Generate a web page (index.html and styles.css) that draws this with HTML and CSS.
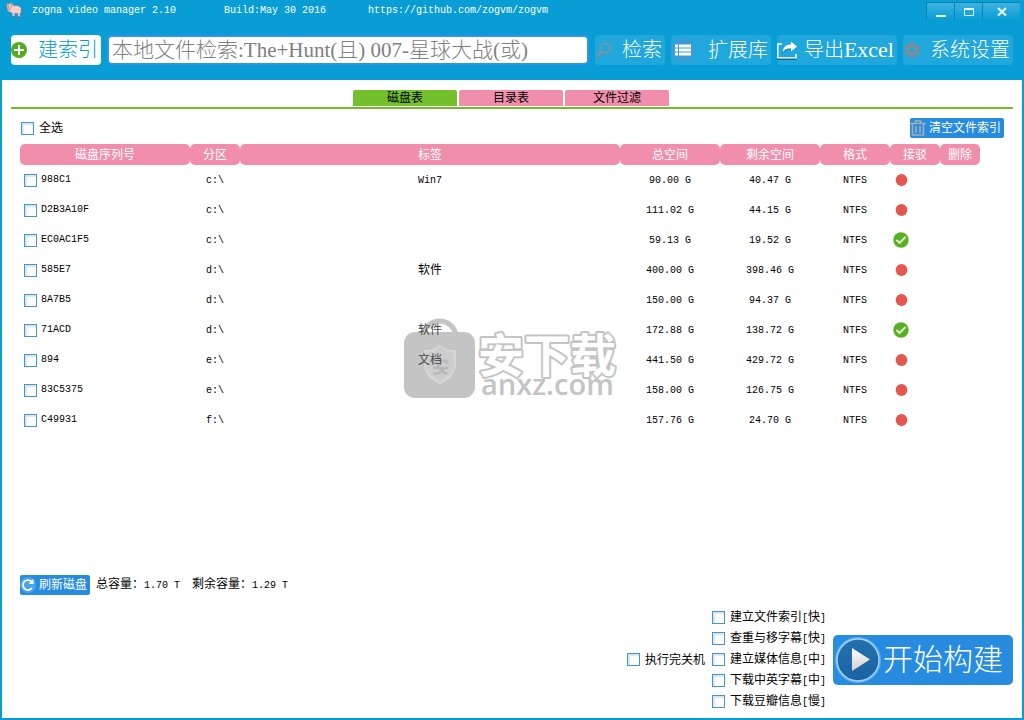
FILE: index.html
```html
<!DOCTYPE html>
<html lang="zh-CN">
<head>
<meta charset="utf-8">
<title>zogna video manager 2.10</title>
<link rel="stylesheet" href="styles.css">
</head>
<body>
<div class="window">
  <header class="header">
    <div class="titlebar">
      <svg class="pig" viewBox="0 0 16 16" aria-hidden="true">
        <path d="M.800 1.500L3 2.200 5.500.800 7 3.500l5.500.5 2.500 2v4l-1 1.500V15h-2v-3.500L8.500 11v3.500h-2V11L3 9.500 1.500 8z" fill="#f6cfca" stroke="#c58f88" stroke-width=".5"/>
        <path d="M1 1.800l2 .8-1 2zM5.300 1l1.200 3-2.300-1.200z" fill="#d98c86"/>
        <rect x="2" y="6.200" width="3" height="2" rx="1" fill="#dc8f8a"/>
        <path d="M2.300 5h.9M4.700 4.700h.9" stroke="#50302e" stroke-width=".9"/>
        <path d="M6.500 14.600h2M12 15h2" stroke="#6b4a48" stroke-width=".8"/>
      </svg>
      <span class="mono app-name">zogna video manager 2.10</span>
      <span class="mono build">Build:May 30 2016</span>
      <a class="mono site" href="https://github.com/zogvm/zogvm">https://github.com/zogvm/zogvm</a>
      <div class="controls">
        <button class="control" aria-label="最小化"><svg viewBox="0 0 12 12"><path d="M1 10h10" stroke="#e8f7fd" stroke-width="2"/></svg></button>
        <button class="control" aria-label="最大化"><svg viewBox="0 0 12 12"><path d="M1.500 2.500h9v7h-9z" fill="none" stroke="#d5f0fb"/><path d="M1 3h10" stroke="#e8f7fd" stroke-width="2"/></svg></button>
        <button class="control control-close" aria-label="关闭"><svg viewBox="0 0 12 12"><path d="M2 2l8 7.500M10 2L2 9.500" stroke="#e8f7fd" stroke-width="2.200"/></svg></button>
      </div>
    </div>
    <div class="toolbar">
      <button class="tool tool-index"><svg class="icon16" viewBox="0 0 16 16"><circle cx="8" cy="8" r="8" fill="#53ad1e"/><path d="M8 3v10M3 8h10" stroke="#fff" stroke-width="2"/></svg><span>建索引</span></button>
      <input class="search" type="text" aria-label="本地文件检索" placeholder="本地文件检索:The+Hunt(且) 007-星球大战(或)">
      <button class="tool tool-search"><svg class="icon16" viewBox="0 0 16 16"><circle cx="10.500" cy="6" r="4.800" fill="none" stroke="#8c9296" stroke-width="1.500"/><path d="M7 9.500L1.500 14.500" stroke="#8c8f93" stroke-width="2.400"/></svg><span>检索</span></button>
      <button class="tool tool-library"><svg class="icon24" viewBox="0 0 24 24"><circle cx="12" cy="12" r="12" fill="#3b9cd6"/><path d="M4 8h3M4 12h3M4 16h3M8 8h12M8 12h12M8 16h12" stroke="#fff" stroke-width="3"/></svg><span>扩展库</span></button>
      <button class="tool tool-export"><svg class="icon20" viewBox="0 0 20 20"><path d="M5 4H.800v14H19v-4" fill="none" stroke="#fff" stroke-width="1.500"/><path d="M0 19.200h19.500" stroke="#234656"/><path d="M6 12C6 7 9 4.500 14 4.500V1.500L20 6.500l-6 5V8.500C10 8.500 8 9 6 12z" fill="#fff"/><path d="M6 12.500c2-2.500 4-3.500 8-3.500" fill="none" stroke="#3a6170" stroke-width=".7"/></svg><span>导出<span class="latin">Excel</span></span></button>
      <button class="tool tool-settings"><svg class="icon16 gear" viewBox="0 0 16 16"><path d="M6.500 0h3l.5 2.500 1.500 1L14 2.500l1.700 2.800L14 7v2l1.700 1.700L14 13.500l-2.500-1-1.500 1L9.500 16h-3L6 13.500l-1.500-1-2.500 1L.300 10.700 2 9V7L.300 5.300 2 2.500l2.500 1L6 2.500zM8 5a3 3 0 100 6 3 3 0 000-6z" fill="#858b91" fill-rule="evenodd"/></svg><span>系统设置</span></button>
    </div>
  </header>

  <main class="main">
    <nav class="tabs">
      <button class="tab tab-active">磁盘表</button>
      <button class="tab">目录表</button>
      <button class="tab">文件过滤</button>
    </nav>

    <section class="panel">
      <div class="panel-top">
        <label class="check"><input type="checkbox">全选</label>
        <button class="small-button"><svg class="trash" viewBox="0 0 16 16"><path d="M0 3.500h16M5.500 3V1h5v2M2.500 3v12h11V3M6 6v7M10 6v7" fill="none" stroke="#a8adb3" stroke-width="1.600"/></svg>清空文件索引</button>
      </div>

      <svg class="watermark" viewBox="0 0 216 84" aria-hidden="true">
        <path d="M19 16a17 17 0 0 1 33 0" fill="none" stroke="#c4c4c4" stroke-width="5"/>
        <rect x="0" y="14" width="71" height="66" rx="11" fill="#c4c4c4"/>
        <path d="M36 28c5 4 10 5 15 5v14c0 9-8 14-15 18-7-4-15-9-15-18V33c5 0 10-1 15-5z" fill="#cdcdcd" stroke="#dadada" stroke-width="1.500"/>
        <path d="M29 46v-3h14v3M36 40v3M29 50h15M34 46c0 5 4 8 9 10M40 50c-2 4-6 6-11 6" fill="none" stroke="#b8b8b8" stroke-width="2.500"/>
        <text class="wm-name" x="74" y="54">安下载</text>
        <text class="wm-site" x="77" y="77">anxz.com</text>
      </svg>

      <table class="disks">
        <colgroup><col class="c-serial"><col class="c-part"><col><col class="c-size"><col class="c-size"><col class="c-format"><col class="c-link"><col class="c-del"></colgroup>
        <thead><tr><th>磁盘序列号</th><th>分区</th><th>标签</th><th>总空间</th><th>剩余空间</th><th>格式</th><th>接驳</th><th>删除</th></tr></thead>
        <tbody>
          <tr><td><label class="disk mono"><input type="checkbox">988C1</label></td><td class="mono">c:\</td><td class="mono">Win7</td><td class="mono">90.00 G</td><td class="mono">40.47 G</td><td class="mono">NTFS</td><td><svg class="state" viewBox="0 0 16 16"><use href="#off"/></svg></td><td></td></tr>
          <tr><td><label class="disk mono"><input type="checkbox">D2B3A10F</label></td><td class="mono">c:\</td><td></td><td class="mono">111.02 G</td><td class="mono">44.15 G</td><td class="mono">NTFS</td><td><svg class="state" viewBox="0 0 16 16"><use href="#off"/></svg></td><td></td></tr>
          <tr><td><label class="disk mono"><input type="checkbox">EC0AC1F5</label></td><td class="mono">c:\</td><td></td><td class="mono">59.13 G</td><td class="mono">19.52 G</td><td class="mono">NTFS</td><td><svg class="state" viewBox="0 0 16 16"><use href="#on"/></svg></td><td></td></tr>
          <tr><td><label class="disk mono"><input type="checkbox">585E7</label></td><td class="mono">d:\</td><td>软件</td><td class="mono">400.00 G</td><td class="mono">398.46 G</td><td class="mono">NTFS</td><td><svg class="state" viewBox="0 0 16 16"><use href="#off"/></svg></td><td></td></tr>
          <tr><td><label class="disk mono"><input type="checkbox">8A7B5</label></td><td class="mono">d:\</td><td></td><td class="mono">150.00 G</td><td class="mono">94.37 G</td><td class="mono">NTFS</td><td><svg class="state" viewBox="0 0 16 16"><use href="#off"/></svg></td><td></td></tr>
          <tr><td><label class="disk mono"><input type="checkbox">71ACD</label></td><td class="mono">d:\</td><td class="shaded">软件</td><td class="mono">172.88 G</td><td class="mono">138.72 G</td><td class="mono">NTFS</td><td><svg class="state" viewBox="0 0 16 16"><use href="#on"/></svg></td><td></td></tr>
          <tr><td><label class="disk mono"><input type="checkbox">894</label></td><td class="mono">e:\</td><td class="shaded">文档</td><td class="mono">441.50 G</td><td class="mono">429.72 G</td><td class="mono">NTFS</td><td><svg class="state" viewBox="0 0 16 16"><use href="#off"/></svg></td><td></td></tr>
          <tr><td><label class="disk mono"><input type="checkbox">83C5375</label></td><td class="mono">e:\</td><td></td><td class="mono">158.00 G</td><td class="mono">126.75 G</td><td class="mono">NTFS</td><td><svg class="state" viewBox="0 0 16 16"><use href="#off"/></svg></td><td></td></tr>
          <tr><td><label class="disk mono"><input type="checkbox">C49931</label></td><td class="mono">f:\</td><td></td><td class="mono">157.76 G</td><td class="mono">24.70 G</td><td class="mono">NTFS</td><td><svg class="state" viewBox="0 0 16 16"><use href="#off"/></svg></td><td></td></tr>
        </tbody>
      </table>
    </section>

    <div class="summary">
      <button class="small-button"><svg class="refresh" viewBox="0 0 16 16"><circle cx="8" cy="8" r="8" fill="#4aa3e8"/><path d="M12 11a5 5 0 1 1-.500-6.500" fill="none" stroke="#fff" stroke-width="1.800"/><path d="M13.500 2v5H8.500z" fill="#fff"/></svg>刷新磁盘</button>
      <span>总容量：<span class="mono">1.70 T</span></span>
      <span>剩余容量：<span class="mono">1.29 T</span></span>
    </div>

    <footer class="actions">
      <label class="check shutdown"><input type="checkbox">执行完关机</label>
      <div class="options">
        <label class="check"><input type="checkbox"><span>建立文件索引<span class="mono">[</span>快<span class="mono">]</span></span></label>
        <label class="check"><input type="checkbox"><span>查重与移字幕<span class="mono">[</span>快<span class="mono">]</span></span></label>
        <label class="check"><input type="checkbox"><span>建立媒体信息<span class="mono">[</span>中<span class="mono">]</span></span></label>
        <label class="check"><input type="checkbox"><span>下载中英字幕<span class="mono">[</span>中<span class="mono">]</span></span></label>
        <label class="check"><input type="checkbox"><span>下载豆瓣信息<span class="mono">[</span>慢<span class="mono">]</span></span></label>
      </div>
      <button class="start"><svg class="play" viewBox="0 0 46 46">
        <defs><linearGradient id="tri" x1="0" y1="0" x2="0" y2="1"><stop offset="0" stop-color="#fff"/><stop offset="1" stop-color="#cfcfcf"/></linearGradient><linearGradient id="disc" x1="0" y1="0" x2="0" y2="1"><stop offset="0" stop-color="#2471b0"/><stop offset="1" stop-color="#1b63a2"/></linearGradient></defs>
        <circle cx="23" cy="23" r="22" fill="none" stroke="#5cadee" stroke-width="2"/>
        <circle cx="23" cy="23" r="21" fill="url(#disc)" stroke="#a5d4f8" stroke-width="1.400"/><path d="M17 11l18 11.500L17 34z" fill="url(#tri)"/></svg>开始构建</button>
    </footer>
  </main>
</div>
<svg class="symbols" aria-hidden="true">
  <symbol id="off" viewBox="0 0 16 16"><circle cx="8.500" cy="8" r="5.900" fill="#e45850"/></symbol>
  <symbol id="on" viewBox="0 0 16 16"><circle cx="8" cy="8" r="7.700" fill="#56b021"/><path d="M3.500 8l3 3L12.500 5" fill="none" stroke="#e6f6dc" stroke-width="1.900"/></symbol>
</svg>
</body>
</html>
```
FILE: styles.css
```css
* { box-sizing: border-box; }
body {
  margin: 0;
  font: 12px/16px "Liberation Serif", "Noto Sans CJK SC", sans-serif;
  color: #000;
}
button, input { font: inherit; margin: 0; }
button { border: 0; padding: 0; color: inherit; background: none; cursor: pointer; white-space: nowrap; }
svg { display: block; flex: none; }
.symbols { display: none; }
.mono { font-family: "Liberation Mono", monospace; font-size: 10px; }

.window {
  min-height: 100vh;
  display: flex;
  flex-direction: column;
  border: solid #089dd5;
  border-width: 0 2px 2px;
  background: #fff;
}

.header { background: #089dd5; height: 80px; padding: 0 9px; color: #fff; }
.titlebar { display: flex; align-items: flex-start; height: 35px; margin: 0 -7px 0 -5px; padding-top: 2px; }
.titlebar .mono { padding-top: 1px; }
.pig { width: 16px; height: 16px; margin-right: 10px; }
.app-name { margin-right: 48px; }
.build { margin-right: 42px; }
.site { color: #fff; text-decoration: none; }
.controls { display: flex; margin-left: auto; }
.control {
  display: grid;
  place-items: center;
  width: 28px;
  height: 18px;
  border-left: 1px solid #0784b4;
  border-top: 1px solid #0784b4;
  background: linear-gradient(#3db2df, #089dd5);
}
.control svg { width: 12px; height: 12px; }
.control-close { width: 38px; }

.toolbar { display: flex; gap: 6px; height: 30px; }
.tool {
  display: flex;
  align-items: center;
  justify-content: space-between;
  padding-right: 3px;
  border-radius: 4px;
  background: #20a7db;
  color: #fff;
  font-size: 20px;
  font-weight: 300;
  line-height: 28px;
}
.latin { font-size: 22px; }
.tool-index { width: 90px; background: #fff; color: #089dd5; }
.tool-search { width: 70px; }
.tool-library { width: 100px; }
.tool-export { width: 120px; }
.tool-settings { width: 110px; }
.icon16 { width: 16px; height: 16px; }
.icon20 { width: 20px; height: 20px; }
.icon24 { width: 24px; height: 24px; }
.gear { margin-left: 1px; }
.search {
  flex: 1;
  min-width: 0;
  padding: 0 3px;
  border: 2px solid #2f94ec;
  border-radius: 5px;
  background: #fff;
  color: #333;
  font-size: 21px;
  font-weight: 300;
}
.search::placeholder { color: #808080; opacity: 1; }

.main { flex: 1; display: flex; flex-direction: column; padding: 10px 9px 6px; }
.tabs { display: flex; justify-content: center; gap: 2px; border-bottom: 2px solid #73bb2c; padding: 0 2px 1px 0; }
.tab { width: 104px; height: 16px; border-radius: 2px 2px 0 0; background: #f08eab; line-height: 16px; }
.tab-active { background: #73bf2c; }

.panel { position: relative; padding: 9px 9px 0; flex: 1; }
.panel-top { display: flex; align-items: center; justify-content: space-between; height: 20px; margin-bottom: 6px; padding-left: 1px; }
.check { display: flex; align-items: center; gap: 5px; white-space: nowrap; }
input[type="checkbox"] {
  appearance: none;
  flex: none;
  width: 13px;
  height: 13px;
  border: 1px solid #3f98d2;
  background: #fff;
  box-shadow: inset 2px 2px 1px #dce5ec;
}
.small-button {
  display: flex;
  align-items: center;
  gap: 3px;
  height: 20px;
  padding: 0 3px 0 0;
  border-radius: 2px;
  background: #278be0;
  color: #fff;
}
.trash, .refresh { width: 16px; height: 16px; }

.disks { position: relative; width: calc(100% - 24px); table-layout: fixed; border-collapse: separate; border-spacing: 0; }
.c-serial { width: 170px; }
.c-part, .c-link { width: 50px; }
.c-size { width: 100px; }
.c-format { width: 70px; }
.c-del { width: 40px; }
.disks th { height: 21px; padding: 0; border-radius: 5px; background: #f08eab; color: #fff; font-weight: 400; }
.disks td { height: 30px; padding: 0; text-align: center; }
.disks td.mono { padding-top: 1px; }
.disks td.shaded { color: #4a4a4a; }
.disk { display: flex; align-items: center; gap: 4px; padding-left: 4px; }
.state { width: 16px; height: 16px; margin-left: 3px; }

.watermark { position: absolute; left: calc(50% - 108px); top: 209px; width: 216px; height: 84px; pointer-events: none; }
.wm-name { font: 700 46px "Noto Sans CJK SC", sans-serif; fill: #fff; stroke: #c4c4c4; stroke-width: 4px; stroke-linejoin: round; paint-order: stroke; }
.wm-site { font: 600 29px "Open Sans", sans-serif; fill: #c4c4c4; }

.summary { display: flex; align-items: center; gap: 6px; padding-left: 9px; }
.summary span + span { margin-left: 6px; }

.actions { display: flex; align-items: center; justify-content: flex-end; gap: 7px; margin-top: 12px; }
.options { display: flex; flex-direction: column; }
.options .check { height: 21px; }
.start {
  display: flex;
  align-items: center;
  gap: 2px;
  width: 180px;
  height: 50px;
  padding-left: 2px;
  border-radius: 5px;
  background: #278be0;
  color: #fff;
  font-size: 30px;
  font-weight: 300;
}
.play { width: 46px; height: 46px; }
```
